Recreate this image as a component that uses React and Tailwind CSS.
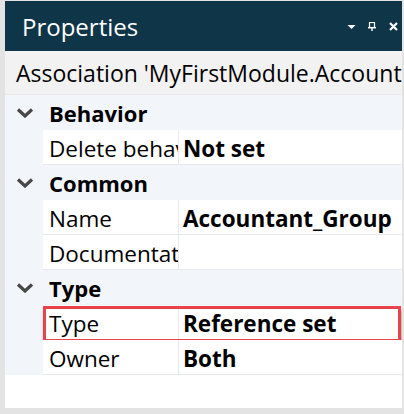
const font = { fontFamily: '"Open Sans", "Noto Sans", sans-serif' };

function Chevron() {
  return (
    <svg width="18" height="10" viewBox="0 0 18 10" className="shrink-0">
      <path d="M2 1.5 L9 8 L16 1.5" fill="none" stroke="#474747" strokeWidth="3.2" />
    </svg>
  );
}

function Category({ label }) {
  return (
    <div className="flex h-[35px] items-center bg-[#f2f5fa]">
      <div className="flex w-[38px] justify-center pl-[2px] pt-[1px]">
        <Chevron />
      </div>
      <span className="pl-[6px] pt-[2px] text-[22px] font-bold leading-[35px] text-black">
        {label}
      </span>
    </div>
  );
}

function Prop({ name, value, highlight }) {
  return (
    <div className="relative flex h-[35px] bg-[#f2f5fa]">
      <div className="w-[38px] shrink-0" />
      <div className="w-[136px] shrink-0 overflow-hidden whitespace-nowrap border-r border-b border-[#e6e9ee] bg-white pl-[6px] pt-[2px] text-[22.5px] leading-[33px] text-black">
        {name}
      </div>
      <div className="flex-1 overflow-hidden whitespace-nowrap border-b border-[#e6e9ee] bg-white pl-[4px] pt-[2px] text-[22.5px] font-bold leading-[33px] text-black">
        {value}
      </div>
      {highlight && (
        <div className="pointer-events-none absolute left-[38px] right-[1px] top-[1px] bottom-[-2px] border-[3px] border-[#e8434b] shadow-[2px_3px_5px_rgba(0,0,0,0.35)]" />
      )}
    </div>
  );
}

export default function App() {
  return (
    <div
      className="flex h-[414px] w-[404px] flex-col bg-[#e3e3e3] pb-[6px] pl-[5px] pr-[2px] pt-[1px]"
      style={font}
    >
      <div className="flex flex-1 flex-col overflow-hidden bg-white">
        <div className="flex h-[50px] shrink-0 items-center bg-[#0f3548] pl-[17px] pr-[4px]">
          <span className="flex-1 pt-[1px] text-[24px] leading-none text-white">Properties</span>
          <div className="flex items-center gap-[12px]">
            <svg width="9" height="9" viewBox="0 0 9 9">
              <path d="M0.5 3 H8.5 L4.5 7 Z" fill="#fff" />
            </svg>
            <svg width="9" height="9" viewBox="0 0 9 9">
              <rect x="1.5" y="0.5" width="5" height="5" fill="none" stroke="#fff" strokeWidth="1.2" />
              <rect x="0" y="5" width="8" height="1.4" fill="#fff" />
              <rect x="3.3" y="6" width="1.4" height="3" fill="#fff" />
            </svg>
            <svg width="9" height="9" viewBox="0 0 9 9">
              <path d="M1 1 L8 8 M8 1 L1 8" stroke="#fff" strokeWidth="2.2" />
            </svg>
          </div>
        </div>
        <div className="h-[44px] shrink-0 overflow-hidden whitespace-nowrap border-b border-[#e9e9e9] bg-[#f2f2f2] pl-[11px] pt-[4px] text-[23px] leading-[36px] text-black">
          Association 'MyFirstModule.Accountant_Group'
        </div>
        <div className="flex flex-col">
          <Category label="Behavior" />
          <Prop name="Delete behavior" value="Not set" />
          <Category label="Common" />
          <Prop name="Name" value="Accountant_Group" />
          <Prop name="Documentation" value="" />
          <Category label="Type" />
          <Prop name="Type" value="Reference set" highlight />
          <Prop name="Owner" value="Both" />
        </div>
      </div>
    </div>
  );
}
